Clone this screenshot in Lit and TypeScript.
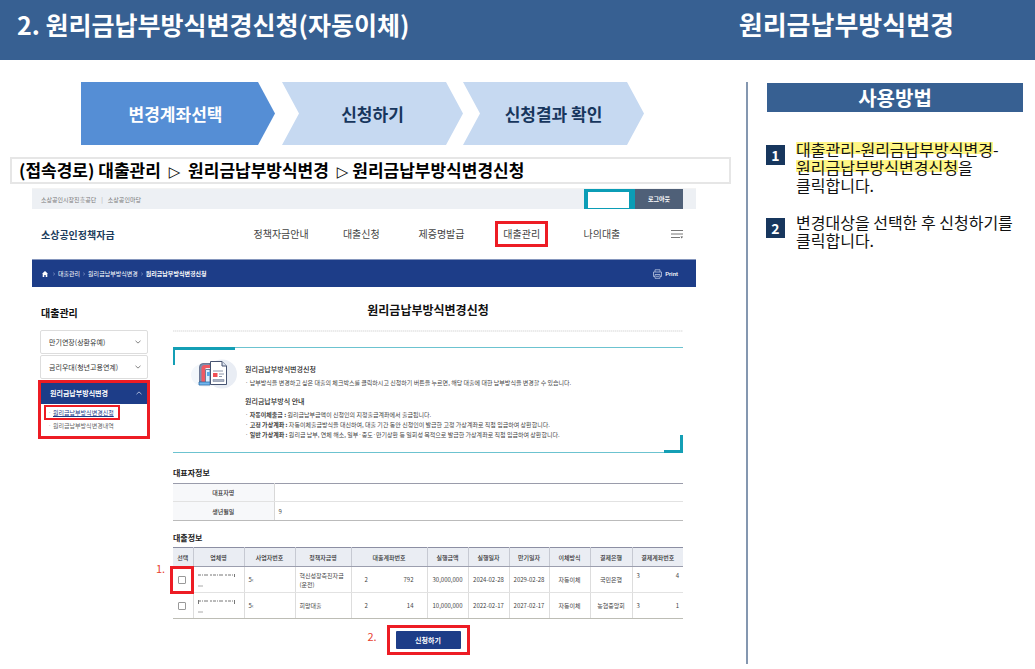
import { LitElement, html, css, svg } from "lit";
import { customElement } from "lit/decorators.js";
import { classMap } from "lit/directives/class-map.js";

const chevron = (up: boolean) => html`<svg class="chev" viewBox="0 0 6 4" aria-hidden="true">
  <path d=${up ? "M0.5 3.2 3 0.9 5.5 3.2" : "M0.5 0.8 3 3.1 5.5 0.8"} fill="none" stroke="currentColor" stroke-width="0.8" />
</svg>`;

@customElement("site-header")
class SiteHeader extends LitElement {
  static styles = css`
    :host { display: block; }
    .top { display: flex; height: 21px; background: #edf0f4; padding: 0 13px 0 9px; border-top: 1px solid #f3f3f3; box-sizing: border-box; font-size: 6px; color: #777; align-items: center; }
    .top a { color: inherit; text-decoration: none; }
    .bar { margin: 0 5px; color: #aaa; }
    .user { margin-left: auto; box-sizing: border-box; width: 51px; height: 20px; background: #fff; border: 4px solid #0b9db6; border-width: 3px 6px 1px 4px; }
    .logout { width: 48px; height: 20px; border: 0; padding: 0; background: #4f6078; color: #fff; font: 700 6px/18px "Noto Sans CJK KR", sans-serif; }
    .main { display: flex; align-items: center; height: 50px; padding: 0 13px 0 9px; }
    .logo { flex: 0 0 200px; font-size: 10px; font-weight: 700; color: #1c3c5c; text-decoration: none; }
    .nav { flex: 1; display: grid; grid-template-columns: repeat(5, 1fr); justify-items: center; }
    .nav a { font-size: 10px; line-height: 20px; color: #444; text-decoration: none; padding: 0 5px; border: 3px solid transparent; }
    .nav a.marked { border-color: #ed1c24; }
    .menu { flex: 0 0 41px; display: flex; justify-content: flex-end; border: 0; padding: 0; background: none; }
    .menu svg { width: 12px; height: 10px; display: block; }
    .crumbs { display: flex; align-items: center; gap: 3px; height: 28px; box-sizing: border-box; padding: 0 18px 0 10px; background: #1d3d88; border-top: 1px solid #8596bd; color: #fff; font-size: 6px; }
    .crumbs a { color: inherit; text-decoration: none; }
    .sep { width: 2px; height: 4px; display: block; }
    .home { width: 6px; height: 6px; display: block; margin-right: 2px; }
    .here { font-weight: 700; }
    .print { margin-left: auto; display: flex; align-items: center; gap: 3px; border: 0; padding: 0; background: none; color: #fff; font: 500 6px/10px Roboto, sans-serif; }
    .print svg { width: 9px; height: 10px; }
  `;
  render() {
    const sep = html`<svg class="sep" viewBox="0 0 2 4"><path d="M0.3 0.5 1.6 2 0.3 3.5" fill="none" stroke="#9fb0d8" stroke-width="0.6" /></svg>`;
    return html`
      <div class="top">
        <a href="#">소상공인시장진흥공단</a><span class="bar">|</span><a href="#">소상공인마당</a>
        <span class="user"></span><button class="logout">로그아웃</button>
      </div>
      <div class="main">
        <a class="logo" href="#">소상공인정책자금</a>
        <nav class="nav">
          ${["정책자금안내", "대출신청", "제증명발급", "대출관리", "나의대출"].map(
            (t) => html`<a href="#" class=${classMap({ marked: t === "대출관리" })}>${t}</a>`
          )}
        </nav>
        <button class="menu" aria-label="전체메뉴">
          <svg viewBox="0 0 12 10"><path d="M0 1.5H12M0 5H12M0 8.500H9" stroke="#777" stroke-width="1" /><path d="M9.500 7.500h2.500l-1.250 2z" fill="#555" /></svg>
        </button>
      </div>
      <div class="crumbs">
        <svg class="home" viewBox="0 0 6 6"><path d="M3 0 6 2.8H5.3V6H3.7V4H2.3V6H0.7V2.8H0Z" fill="#fff" /></svg>
        ${sep}<a href="#">대출관리</a>${sep}<a href="#">원리금납부방식변경</a>${sep}<span class="here">원리금납부방식변경신청</span>
        <button class="print">
          <svg viewBox="0 0 9 10" fill="none" stroke="#b9c5e0" stroke-width="0.8"><path d="M2 3V0.8H7V3M2 7.5H0.5V3H8.5V7.5H7M2 5.5H7V9.3H2ZM3 7.3H6" /></svg>Print
        </button>
      </div>
    `;
  }
}

@customElement("side-menu")
class SideMenu extends LitElement {
  static styles = css`
    :host { display: block; }
    .title { margin: 0 0 9px 3px; font-size: 10px; line-height: 16px; font-weight: 700; color: #111; }
    .item { display: flex; width: calc(100% - 4px); box-sizing: border-box; margin: 0 2px 1px; height: 24px; align-items: center; justify-content: space-between; padding: 0 6px 0 8px; border: 1px solid #ddd; border-radius: 2px; background: #fff; color: #333; font: 400 7px/10px "Noto Sans CJK KR", sans-serif; }
    .open { border: 3px solid #ed1c24; }
    .open .item { width: 100%; margin: 0; height: 21px; background: #1d3d88; border-color: #1d3d88; color: #fff; font-weight: 700; padding: 0 4px 2px 8px; border-radius: 0; }
    .chev { width: 6px; height: 4px; color: #666; }
    .open .chev { color: #c8d2ea; }
    .sub { list-style: none; margin: 0; padding: 1px 3px 5px; font-size: 6px; line-height: 11px; }
    .sub li { display: flex; }
    .sub a { display: block; padding: 0 4px 0 7px; border: 2px solid transparent; color: #666; text-decoration: none; position: relative; }
    .sub a::before { content: "·"; position: absolute; left: 2px; color: #999; }
    .sub a.on { border-color: #ed1c24; color: #1d3d88; }
    .sub a.on span { text-decoration: underline; }
    .sub a.off { border-top: 0; border-bottom: 0; }
  `;
  render() {
    return html`
      <h2 class="title">대출관리</h2>
      <button class="item">만기연장(상환유예)${chevron(false)}</button>
      <button class="item">금리우대(청년고용연계)${chevron(false)}</button>
      <div class="open">
        <button class="item" aria-expanded="true">원리금납부방식변경${chevron(true)}</button>
        <ul class="sub">
          <li><a class="on" href="#"><span>원리금납부방식변경신청</span></a></li>
          <li><a class="off" href="#"><span>원리금납부방식변경내역</span></a></li>
        </ul>
      </div>
    `;
  }
}

interface Loan {
  program: string[];
  account: string;
  amount: string;
  start: string;
  end: string;
  bank: string;
  tail: string;
}

const LOANS: Loan[] = [
  { program: ["혁신성장촉진자금", "(운전)"], account: "792", amount: "30,000,000", start: "2024-02-28", end: "2029-02-28", bank: "국민은행", tail: "4" },
  { program: ["희망대출"], account: "14", amount: "10,000,000", start: "2022-02-17", end: "2027-02-17", bank: "농협중앙회", tail: "1" },
];
const HEADS = ["선택", "업체명", "사업자번호", "정책자금명", "대출계좌번호", "실행금액", "실행일자", "만기일자", "이체방식", "결제은행", "결제계좌번호"];
const COLS = [20, 51, 51, 56, 76, 41, 41, 40, 41, 42, 51];

@customElement("loan-form")
class LoanForm extends LitElement {
  static styles = css`
    :host { display: block; }
    .title { margin: 0; text-align: center; font-size: 12px; line-height: 18px; font-weight: 700; color: #111; }
    .rule { height: 2px; margin: 11px 0 15px; background: repeating-linear-gradient(90deg, #ebebeb 0 1px, #f6f6f6 1px 2px); }
    .info { position: relative; display: flex; gap: 8px; height: 106px; box-sizing: border-box; padding: 11px 0 0 17px; border: solid #6cc3d0; border-width: 1px 0; }
    .info::before { content: ""; position: absolute; left: 0; top: -1px; width: 62px; height: 18px; box-sizing: border-box; border-left: 2px solid #149fb5; background: linear-gradient(#149fb5, #149fb5) 0 0 / 100% 3px no-repeat; }
    .info::after { content: ""; position: absolute; right: 0; bottom: -1px; width: 19px; height: 18px; box-sizing: border-box; border: solid #149fb5; border-width: 0 3px 3px 0; }
    .art { flex: 0 0 47px; height: 30px; }
    .info h3 { margin: 0; font-size: 7px; line-height: 12px; font-weight: 500; color: #222; padding: 4px 0 3px; }
    .info p, .info li { margin: 0; font-size: 6px; line-height: 10px; color: #444; }
    .info p { margin-bottom: 3px; }
    .info ul { list-style: none; margin: 0; padding: 0; }
    .section { margin: 0; font-size: 8px; line-height: 12px; font-weight: 700; color: #222; }
    .info + .section { margin-top: 14px; }
    table { width: 100%; border-collapse: collapse; table-layout: fixed; font-size: 6px; line-height: 9px; color: #444; }
    th, td { padding: 0; }
    th { font-weight: 500; color: #333; }
    .person { margin: 4px 0 11px; border-top: 1px solid #9a9cab; border-bottom: 1px solid #bbb; }
    .person th { width: 101px; background: #f7f8fa; }
    .person th, .person td { height: 18px; border-bottom: 1px solid #e2e2e2; box-sizing: border-box; }
    .person tr:last-child th, .person tr:last-child td { height: 19px; border-bottom-color: #bbb; }
    .person td { border-left: 1px solid #d8d8d8; padding-left: 4px; }
    .loans { margin-top: 3px; border-top: 1px solid #8c8fa3; border-bottom: 1px solid #bdbdb5; text-align: center; }
    .loans th { height: 19px; background: #eaedf3; border-left: 1px solid #c6c9d2; border-bottom: 1px solid #9b9eae; box-sizing: border-box; }
    .loans td { height: 26px; border-left: 1px solid #ddd; border-bottom: 1px solid #e2e2e2; box-sizing: border-box; }
    .loans tr:last-child td { border-bottom-color: #bdbdb5; }
    .loans th:first-child, .loans td:first-child { border-left: 0; }
    .loans .left { text-align: left; padding-left: 4px; }
    .split { display: flex; justify-content: space-between; padding: 0 13px; }
    .raise { padding: 0 4px 8px; }
    .level { padding: 0 4px; }
    .pick { position: relative; }
    .pick input { appearance: none; display: block; box-sizing: border-box; margin: 0 5px; width: 8px; height: 8px; border: 1px solid #999; border-radius: 1px; background: #fff; }
    .ring::after { content: ""; position: absolute; inset: -1px -1px -2px -3px; border: 3px solid #ed1c24; pointer-events: none; }
    .no { position: absolute; color: #e8412f; font-size: 11px; line-height: 14px; }
    .no1 { left: -17px; top: -6px; }
    .redact { display: block; width: 40px; height: 18px; margin-left: 3px; }
    .submit { display: flex; justify-content: center; margin-top: 6px; }
    .frame { position: relative; border: 3px solid #ed1c24; padding: 3px 6px; }
    .frame button { display: block; width: 65px; height: 18px; border: 0; padding: 0; background: #1d3d88; border-radius: 1px; color: #fff; font: 700 7px/18px "Noto Sans CJK KR", sans-serif; }
    .no2 { left: -22px; top: 1px; }
  `;
  art() {
    return svg`
      <ellipse cx="16" cy="16" rx="15" ry="12" fill="#f3f7fb"/>
      <ellipse cx="32" cy="15" rx="15" ry="14.5" fill="#e9edf4"/>
      <path d="M9.500 23V8Q9.500 4.500 13 4.500H20V8H15Q13.500 8 13.500 10V23Z" fill="#7f8fae" stroke="#4d5a7a" stroke-width="0.7"/>
      <path d="M11.500 23V9.500Q11.500 6 15 6H20V9H16.500Q15 9 15 10.500V23Z" fill="#f05a63"/>
      <path d="M15.500 23V10.500H20V23" fill="#d9efff" stroke="#3e4a68" stroke-width="0.7"/>
      <path d="M17 13h3v4h-3z" fill="#5aa9e6"/>
      <path d="M9 23H20V26H9Z" fill="#72b7ee" stroke="#2f6da8" stroke-width="0.8"/>
      <path d="M20.500 2.500H32L36.500 7V25.500H20.500Z" fill="#fff" stroke="#465371" stroke-width="1"/>
      <path d="M32 2.500V7H36.500" fill="#dbe3ef" stroke="#465371"/>
      <path d="M23 12H33M29 15H34M29 17.500H32" stroke="#6f7b95" stroke-width="0.8"/>
      <path d="M23 14H27.500V18H23Z" fill="#f04f55"/>
      <path d="M23 20.500H34V22.500H23Z" fill="#a9b1c2" stroke="#6f7b95" stroke-width="0.5"/>`;
  }
  render() {
    return html`
      <h1 class="title">원리금납부방식변경신청</h1>
      <div class="rule"></div>
      <section class="info">
        <svg class="art" viewBox="0 0 47 30" aria-hidden="true">${this.art()}</svg>
        <div>
          <h3>원리금납부방식변경신청</h3>
          <p>· 납부방식을 변경하고 싶은 대출의 체크박스를 클릭하시고 신청하기 버튼을 누르면, 해당 대출에 대한 납부방식을 변경할 수 있습니다.</p>
          <h3>원리금납부방식 안내</h3>
          <ul>
            <li>· <b>자동이체출금 :</b> 원리금납부금액이 신청인의 지정출금계좌에서 출금됩니다.</li>
            <li>· <b>고정 가상계좌 :</b> 자동이체출금방식을 대신하여, 대출 기간 동안 신청인이 발급한 고정 가상계좌로 직접 입금하여 상환합니다.</li>
            <li>· <b>일반 가상계좌 :</b> 원리금 납부, 연체 해소, 일부·중도·만기상환 등 일회성 목적으로 발급한 가상계좌로 직접 입금하여 상환합니다.</li>
          </ul>
        </div>
      </section>
      <h2 class="section">대표자정보</h2>
      <table class="person">
        <tr><th scope="row">대표자명</th><td></td></tr>
        <tr><th scope="row">생년월일</th><td>9</td></tr>
      </table>
      <h2 class="section">대출정보</h2>
      <table class="loans">
        <colgroup>${COLS.map((w) => html`<col style="width:${w / 5.1}%" />`)}</colgroup>
        <thead><tr>${HEADS.map((h) => html`<th scope="col">${h}</th>`)}</tr></thead>
        <tbody>
          ${LOANS.map(
            (l, i) => html`<tr>
              <td class=${classMap({ pick: true, ring: i === 0 })}>
                ${i === 0 ? html`<span class="no no1">1.</span>` : ""}
                <input type="checkbox" aria-label="${l.program[0]} 선택" />
              </td>
              <td>
                <svg class="redact" viewBox="0 0 40 18" aria-hidden="true">
                  <path d=${i ? "M1.500 3V7M37.500 3V7" : "M37.500 3V6"} stroke="#777" />
                  <path d="M1 4H37" stroke="#777" stroke-width="1" stroke-dasharray="3 1 1 1 4 2 2 1" />
                  <path d="M1 15H6" stroke="#aaa" />
                </svg>
              </td>
              <td class="left">5‹</td>
              <td class="left">${l.program.map((p) => html`<div>${p}</div>`)}</td>
              <td><div class="split"><span>2</span><span>${l.account}</span></div></td>
              <td>${l.amount}</td><td>${l.start}</td><td>${l.end}</td><td>자동이체</td><td>${l.bank}</td>
              <td><div class=${classMap({ split: true, raise: i === 0, level: i === 1 })}><span>3</span><span>${l.tail}</span></div></td>
            </tr>`
          )}
        </tbody>
      </table>
      <div class="submit"><div class="frame"><span class="no no2">2.</span><button>신청하기</button></div></div>
    `;
  }
}

@customElement("app-root")
class AppRoot extends LitElement {
  static styles = css`
    :host { display: flex; flex-direction: column; min-height: 100vh; background: #fff; color: #111; font-family: "Noto Sans CJK KR", sans-serif; }
    .banner { display: flex; justify-content: space-between; height: 60px; box-sizing: border-box; padding: 7px 81px 0 17px; background: #376092; color: #fff; line-height: 34px; font-weight: 700; }
    .banner h1 { margin: 0; font-size: 25px; }
    .banner p { margin: 0; font-size: 26px; }
    .page { flex: 1; display: grid; grid-template-columns: minmax(0, 1fr) 289px; padding: 22px 0 5px; }
    .steps { display: flex; list-style: none; margin: 0 102px 0 81px; padding: 0; height: 63px; font-size: 17px; font-weight: 700; color: #17365d; }
    .step { flex: 181 1 0; display: flex; align-items: center; justify-content: center; background: #c6d9f1; clip-path: polygon(0 0, calc(100% - 17px) 0, 100% 50%, calc(100% - 17px) 100%, 0 100%, 17px 50%); }
    .step.now { flex-grow: 194; margin-right: 7px; background: #558ed5; color: #fff; clip-path: polygon(0 0, calc(100% - 17px) 0, 100% 50%, calc(100% - 17px) 100%, 0 100%); }
    .step.now span { margin-right: 5px; }
    .route { margin: 12px 15px 4px 10px; padding: 0 7px; border: 2px solid #e6e6e6; font-size: 17px; line-height: 22px; height: 23px; font-weight: 700; color: #000; }
    .tri { margin: 0 4px; font-family: "DejaVu Sans", sans-serif; font-size: 15px; line-height: 1; font-weight: 400; }
    .site { margin: 0 50px 0 32px; }
    .body { display: grid; grid-template-columns: 112px minmax(0, 1fr); gap: 23px; padding: 14px 13px 0 6px; }
    .side { padding-top: 4px; }
    aside { border-left: 2px solid #8497b0; padding: 1px 12px 0 18px; }
    .how { margin: 0 0 28px 1px; background: #376092; color: #fff; text-align: center; font-size: 20px; line-height: 29px; font-weight: 700; }
    .tips { list-style: none; margin: 0; padding: 0; display: flex; flex-direction: column; gap: 19px; }
    .tip { display: flex; gap: 11px; font-size: 16px; line-height: 18px; }
    .tip p { margin: 0; white-space: nowrap; }
    .num { flex: 0 0 19px; height: 20px; margin-top: 5px; background: #17365d; color: #fff; text-align: center; font-size: 14px; line-height: 20px; font-weight: 700; }
    .hl { background: linear-gradient(#fff685, #fff685) 0 45% / 100% 12px no-repeat; border-radius: 6px; }
  `;
  render() {
    return html`
      <header class="banner"><h1>2. 원리금납부방식변경신청(자동이체)</h1><p>원리금납부방식변경</p></header>
      <div class="page">
        <main>
          <ol class="steps">
            <li class="step now"><span>변경계좌선택</span></li>
            <li class="step">신청하기</li>
            <li class="step">신청결과 확인</li>
          </ol>
          <div class="route">(접속경로) 대출관리 <span class="tri">▷</span> 원리금납부방식변경 <span class="tri">▷</span>원리금납부방식변경신청</div>
          <div class="site">
            <site-header></site-header>
            <div class="body"><side-menu class="side"></side-menu><loan-form></loan-form></div>
          </div>
        </main>
        <aside>
          <h2 class="how">사용방법</h2>
          <ol class="tips">
            <li class="tip"><span class="num">1</span><p><span class="hl">대출관리-원리금납부방식변경</span>-<br /><span class="hl">원리금납부방식변경신청</span>을<br />클릭합니다.</p></li>
            <li class="tip"><span class="num">2</span><p>변경대상을 선택한 후 신청하기를<br />클릭합니다.</p></li>
          </ol>
        </aside>
      </div>
    `;
  }
}
